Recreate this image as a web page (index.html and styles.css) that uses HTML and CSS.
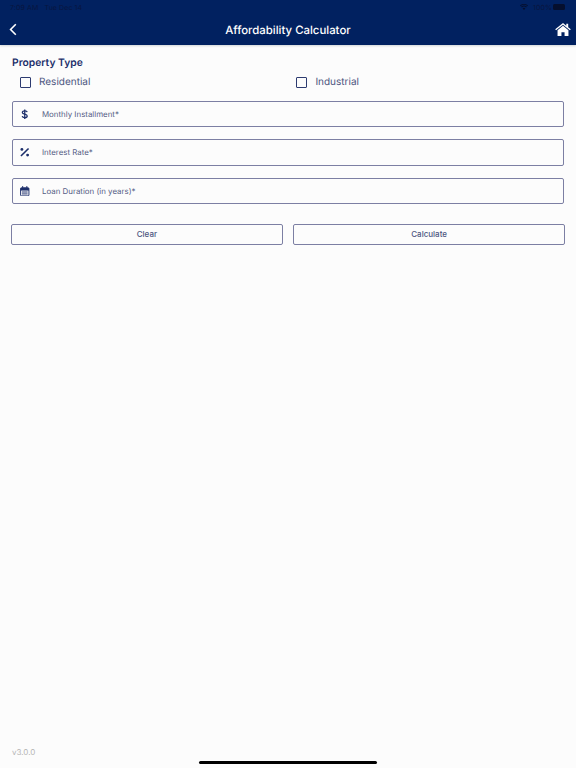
FILE: index.html
```html
<!DOCTYPE html>
<html lang="en">
<head>
<meta charset="utf-8">
<title>Affordability Calculator</title>
<link rel="stylesheet" href="styles.css">
</head>
<body>
<div class="screen">
  <header class="header">
    <div class="status">
      <span class="status-time">7:09 AM &nbsp; Tue Dec 14</span>
      <span class="status-right">
        <svg class="wifi" viewBox="0 0 12 9" aria-hidden="true"><path d="M6 9 3.900 6.600a3 3 0 0 1 4.200 0zM2.800 5.400 1.600 4.100a6.200 6.200 0 0 1 8.800 0L9.200 5.400a4.500 4.500 0 0 0-6.400 0zM.9 3.300 0 2.300a8.600 8.600 0 0 1 12 0l-.9 1a7.300 7.300 0 0 0-10.200 0z"/></svg>
        <span class="status-pct">100%</span>
        <span class="battery"></span>
      </span>
    </div>
    <div class="nav">
      <svg class="back" viewBox="0 0 10 16" aria-hidden="true"><path d="M8.500 1.500 2 8l6.500 6.500"/></svg>
      <h1 class="title">Affordability Calculator</h1>
      <svg class="home" viewBox="0 0 18 15" aria-hidden="true"><path d="M9 0 0 7.300l1 1.200L9 2l8 6.500 1-1.200-3-2.400V1h-2.200v2.100z"/><path d="M9 3.300 2.700 8.500V15h4.500v-4.200h3.600V15h4.500V8.500z"/></svg>
    </div>
  </header>

  <main class="content">
    <h2 class="section-label">Property Type</h2>
    <div class="type-row">
      <label class="type-option"><span class="box"></span>Residential</label>
      <label class="type-option"><span class="box"></span>Industrial</label>
    </div>

    <div class="fields">
      <div class="field">
        <span class="field-icon">
          <svg viewBox="0 0 10 14" aria-hidden="true"><path class="ico-stroke" d="M8.300 4.300C8 3 6.700 2.500 5 2.500c-1.900 0-3.200.9-3.200 2.200C1.800 7.800 8.300 6 8.300 9.300c0 1.300-1.400 2.200-3.300 2.200-1.800 0-3.100-.6-3.400-2"/><path class="ico-stroke" d="M5 .5v13"/></svg>
        </span>
        <span class="field-label">Monthly Installment*</span>
      </div>
      <div class="field">
        <span class="field-icon">
          <svg viewBox="0 0 10 10" aria-hidden="true"><path class="ico-stroke" d="M9 1 1 9"/><circle class="ico-fill" cx="2" cy="2" r="1.500"/><circle class="ico-fill" cx="8" cy="8" r="1.500"/></svg>
        </span>
        <span class="field-label">Interest Rate*</span>
      </div>
      <div class="field">
        <span class="field-icon">
          <svg viewBox="0 0 10 11" aria-hidden="true"><rect class="ico-thin" x=".6" y="1.800" width="8.800" height="8.600" rx="1"/><path class="ico-fill" d="M.6 2h8.800v2.800H.6z"/><path class="ico-thin" d="M2.800 0v2M7.200 0v2M2 6.300h6M2 8.300h6"/></svg>
        </span>
        <span class="field-label">Loan Duration (in years)*</span>
      </div>
    </div>

    <div class="actions">
      <button class="btn" type="button">Clear</button>
      <button class="btn" type="button">Calculate</button>
    </div>

    <div class="version">v3.0.0</div>
  </main>

  <div class="home-indicator"></div>
</div>
</body>
</html>
```

FILE: styles.css
```css
* { box-sizing: border-box; }
html, body { margin: 0; padding: 0; }
body {
  width: 576px;
  height: 768px;
  overflow: hidden;
  background: #fcfcfc;
  font-family: Inter, "Liberation Sans", sans-serif;
  color: #1f2d66;
  text-rendering: geometricPrecision;
}
.screen {
  position: relative;
  height: 768px;
  display: flex;
  flex-direction: column;
}
.header {
  height: 45px;
  flex: none;
  background: #012160;
  box-shadow: 0 1px 2px rgba(80, 95, 100, 0.25);
  display: flex;
  flex-direction: column;
}
.status {
  height: 13px;
  padding: 1px 11px 0 10px;
  display: flex;
  justify-content: space-between;
  align-items: center;
  font-size: 7px;
  letter-spacing: 0.1px;
  color: #08153f;
}
.status-right { display: flex; align-items: center; }
.status-pct { margin: 0 1px 0 5px; }
.wifi { width: 8px; height: 6px; fill: #050f2e; }
.battery { width: 12px; height: 6px; border-radius: 1.500px; background: #050f2e; }
.nav {
  flex: 1;
  display: flex;
  align-items: center;
  justify-content: space-between;
  padding: 1px 5.500px 0 9px;
  position: relative;
}
.back {
  width: 8px;
  height: 13px;
  fill: none;
  stroke: #fff;
  stroke-width: 2;
}
.home { width: 16px; height: 13px; fill: #fff; }
.title {
  position: absolute;
  left: 0;
  right: 0;
  margin: 0;
  text-align: center;
  font-size: 11.400px;
  font-weight: 500;
  color: #fff;
}
.content {
  flex: 1;
  padding: 11.600px 11.200px 0;
  display: flex;
  flex-direction: column;
}
.section-label {
  margin: 0 0 0 .8px;
  height: 13px;
  line-height: 13px;
  font-size: 10.300px;
  font-weight: 600;
  color: #1d2f6b;
}
.type-row {
  display: grid;
  grid-template-columns: 1fr 1fr;
  gap: 8px;
  margin-top: 5.900px;
  padding-left: 8.800px;
}
.type-option {
  display: flex;
  align-items: center;
  gap: 8px;
  height: 14px;
  font-size: 10px;
  color: #4d5680;
}
.box {
  width: 11px;
  height: 11px;
  border: 1.500px solid #2d3b70;
  border-radius: 1px;
  flex: none;
}
.fields {
  margin: 11.100px .8px 0;
  display: flex;
  flex-direction: column;
  gap: 12px;
}
.field {
  height: 26.500px;
  border: 1px solid #7c7fa3;
  border-radius: 2px;
  display: flex;
  align-items: center;
  padding-left: 7px;
}
.field-icon {
  width: 10px;
  height: 14px;
  display: flex;
  align-items: center;
  justify-content: center;
  flex: none;
}
.field-icon svg { width: 9.500px; height: 10.500px; display: block; }
.ico-stroke { fill: none; stroke: #1d2f6b; stroke-width: 1.700; }
.ico-thin { fill: none; stroke: #1d2f6b; stroke-width: 1; }
.ico-fill { fill: #1d2f6b; }
.field-label {
  margin-left: 12px;
  font-size: 7.900px;
  color: #555d85;
}
.actions {
  margin-top: 19.700px;
  display: grid;
  grid-template-columns: 1fr 1fr;
  gap: 10.800px;
}
.btn {
  height: 21px;
  padding: 0;
  background: transparent;
  border: 1px solid #7c7fa3;
  border-radius: 2px;
  font: 500 8px Inter, "Liberation Sans", sans-serif;
  color: #4d5680;
}
.version {
  margin: auto 0 11px .8px;
  font-size: 8px;
  color: #b5b5b5;
}
.home-indicator {
  position: absolute;
  left: 199px;
  bottom: 4px;
  width: 178px;
  height: 3px;
  border-radius: 2px;
  background: #000;
}
```
